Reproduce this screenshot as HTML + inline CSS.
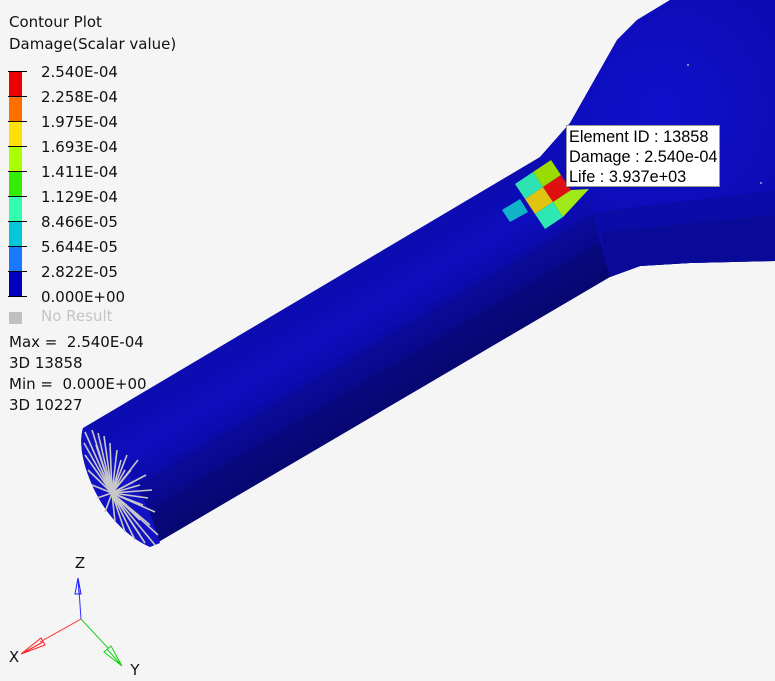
<!DOCTYPE html>
<html><head><meta charset="utf-8"><style>
html,body{margin:0;padding:0;background:#f5f5f5;}
body{width:775px;height:681px;position:relative;overflow:hidden;font-family:"DejaVu Sans",sans-serif;}
.t{position:absolute;font-size:15px;color:#111;white-space:nowrap;line-height:17px;}
.tip{position:absolute;left:566px;top:125px;width:154px;height:62px;background:#fff;border:1px solid #999;font-family:"Liberation Sans",Arial,sans-serif;font-size:16.3px;line-height:20px;color:#000;box-sizing:border-box;padding:1px 0 0 2px;}
</style></head><body>
<svg width="775" height="681" style="position:absolute;left:0;top:0">
<defs>
<linearGradient id="sh" gradientUnits="userSpaceOnUse" x1="300" y1="299" x2="370" y2="417">
<stop offset="0" stop-color="#0c0cb0"/><stop offset="0.35" stop-color="#0d0dbe"/>
<stop offset="0.55" stop-color="#0b0baa"/><stop offset="0.56" stop-color="#0a0a9c"/>
<stop offset="0.75" stop-color="#09098c"/><stop offset="0.76" stop-color="#080880"/>
<stop offset="1" stop-color="#070772"/></linearGradient>
<radialGradient id="fl" cx="660" cy="110" r="160" gradientUnits="userSpaceOnUse">
<stop offset="0" stop-color="#1010cc"/><stop offset="1" stop-color="#0b0bb2"/></radialGradient>
</defs>
<path d="M83,428 L540,157 L570,123 L617,40 L637,20 L670,0 L775,0 L775,261 L690,263 L640,266 L610,277 L150,547 C130,538 110,520 97,495 C84,470 78,445 83,428 Z" fill="url(#sh)"/>
<path d="M540,157 L570,123 L617,40 L637,20 L670,0 L775,0 L775,261 L690,263 L640,266 L610,277 L600,240 L590,200 Z" fill="url(#fl)"/>
<path d="M600,232 L775,215 L775,261 L690,263 L640,266 L610,277 Z" fill="#0a0a98"/>
<path d="M595,212 L775,190 L775,215 L600,232 Z" fill="#0b0ba8"/>
<path d="M83,428 C78,445 84,470 97,495 C110,520 130,538 150,547 L160,543 C150,510 135,470 90,430 Z" fill="#1212c4"/>
<g stroke="#c8c8c8" stroke-width="1.6">
<line x1="112" y1="493" x2="85" y2="432"/><line x1="112" y1="493" x2="92" y2="430"/>
<line x1="112" y1="493" x2="98" y2="433"/><line x1="112" y1="493" x2="104" y2="436"/>
<line x1="112" y1="493" x2="110" y2="443"/><line x1="112" y1="493" x2="117" y2="450"/>
<line x1="112" y1="493" x2="121" y2="460"/><line x1="112" y1="493" x2="127" y2="455"/>
<line x1="112" y1="493" x2="131" y2="470"/><line x1="112" y1="493" x2="133" y2="482"/>
<line x1="112" y1="493" x2="140" y2="485"/><line x1="112" y1="493" x2="148" y2="498"/>
<line x1="112" y1="493" x2="143" y2="505"/><line x1="112" y1="493" x2="155" y2="512"/>
<line x1="112" y1="493" x2="150" y2="525"/><line x1="112" y1="493" x2="158" y2="535"/>
<line x1="112" y1="493" x2="155" y2="545"/><line x1="112" y1="493" x2="145" y2="543"/>
<line x1="112" y1="493" x2="135" y2="540"/><line x1="112" y1="493" x2="125" y2="532"/>
<line x1="112" y1="493" x2="115" y2="522"/><line x1="112" y1="493" x2="105" y2="512"/>
<line x1="112" y1="493" x2="97" y2="498"/><line x1="112" y1="493" x2="92" y2="485"/>
<line x1="112" y1="493" x2="88" y2="470"/><line x1="112" y1="493" x2="85" y2="455"/>
<line x1="112" y1="493" x2="84" y2="443"/><line x1="112" y1="493" x2="96" y2="445"/>
<line x1="112" y1="493" x2="140" y2="520"/><line x1="112" y1="493" x2="125" y2="470"/>
<line x1="112" y1="493" x2="138" y2="460"/><line x1="112" y1="493" x2="146" y2="475"/>
<line x1="112" y1="493" x2="152" y2="490"/><line x1="112" y1="493" x2="140" y2="535"/>
</g>
<g>
<polygon points="515,184 533,172 543,187 525,199" fill="#2ee3b2"/>
<polygon points="533,172 551,160 561,175 543,187" fill="#98dc00"/>
<polygon points="525,199 543,187 553,202 535,214" fill="#e0c410"/>
<polygon points="543,187 561,175 571,190 553,202" fill="#e01010"/>
<polygon points="502,210 520,199 528,212 510,222" fill="#10b4c8"/>
<polygon points="535,214 553,202 563,217 545,229" fill="#2ee8b4"/>
<polygon points="553,202 571,190 589,189 563,217" fill="#a0e818"/>
</g>
<circle cx="688" cy="65" r="1" fill="#aab"/><circle cx="761" cy="183" r="1" fill="#aab"/>
<g fill="none" stroke-width="1">
<line x1="81" y1="619" x2="79" y2="590" stroke="#3030ff"/>
<path d="M78,578 L75,594 L81,594 Z M78,578 L79,594" stroke="#2020ff"/>
<line x1="81" y1="619" x2="40" y2="642" stroke="#ff3030"/>
<path d="M21,654 L41,638 L45,645 Z M21,654 L43,642" stroke="#ff2020"/>
<line x1="81" y1="619" x2="108" y2="648" stroke="#20d020"/>
<path d="M122,666 L104,652 L111,646 Z M122,666 L107,649" stroke="#10d010"/>
</g>
<text x="80" y="568" font-family="DejaVu Sans" font-size="15" text-anchor="middle" fill="#111">Z</text>
<text x="14" y="662" font-family="DejaVu Sans" font-size="15" text-anchor="middle" fill="#111">X</text>
<text x="135" y="675" font-family="DejaVu Sans" font-size="15" text-anchor="middle" fill="#111">Y</text>
<g>
<rect x="9" y="71" width="13" height="25" fill="#ee0000"/>
<rect x="9" y="96" width="13" height="25" fill="#ff6e00"/>
<rect x="9" y="121" width="13" height="25" fill="#ffe000"/>
<rect x="9" y="146" width="13" height="25" fill="#aaff00"/>
<rect x="9" y="171" width="13" height="25" fill="#33ee00"/>
<rect x="9" y="196" width="13" height="25" fill="#30ffb0"/>
<rect x="9" y="221" width="13" height="25" fill="#00c8d8"/>
<rect x="9" y="246" width="13" height="25" fill="#1a7aff"/>
<rect x="9" y="271" width="13" height="25" fill="#0000c0"/>
<rect x="9" y="312" width="13" height="12" fill="#c0c0c0"/>
</g>
<g stroke="#000" stroke-width="1">
<line x1="8" y1="71.5" x2="27" y2="71.5"/><line x1="8" y1="96.5" x2="27" y2="96.5"/>
<line x1="8" y1="121.5" x2="27" y2="121.5"/><line x1="8" y1="146.5" x2="27" y2="146.5"/>
<line x1="8" y1="171.5" x2="27" y2="171.5"/><line x1="8" y1="196.5" x2="27" y2="196.5"/>
<line x1="8" y1="221.5" x2="27" y2="221.5"/><line x1="8" y1="246.5" x2="27" y2="246.5"/>
<line x1="8" y1="271.5" x2="27" y2="271.5"/><line x1="8" y1="296.5" x2="27" y2="296.5"/>
</g>
</svg>
<div class="t" style="left:9px;top:14px">Contour Plot</div>
<div class="t" style="left:9px;top:36px">Damage(Scalar value)</div>
<div class="t" style="left:41px;top:64px">2.540E-04</div>
<div class="t" style="left:41px;top:89px">2.258E-04</div>
<div class="t" style="left:41px;top:114px">1.975E-04</div>
<div class="t" style="left:41px;top:139px">1.693E-04</div>
<div class="t" style="left:41px;top:164px">1.411E-04</div>
<div class="t" style="left:41px;top:189px">1.129E-04</div>
<div class="t" style="left:41px;top:214px">8.466E-05</div>
<div class="t" style="left:41px;top:239px">5.644E-05</div>
<div class="t" style="left:41px;top:264px">2.822E-05</div>
<div class="t" style="left:41px;top:289px">0.000E+00</div>
<div class="t" style="left:41px;top:308px;color:#c4c4c4">No Result</div>
<div class="t" style="left:9px;top:334px">Max =&nbsp; 2.540E-04</div>
<div class="t" style="left:9px;top:355px">3D 13858</div>
<div class="t" style="left:9px;top:376px">Min =&nbsp; 0.000E+00</div>
<div class="t" style="left:9px;top:397px">3D 10227</div>
<div class="tip">Element ID : 13858<br>Damage : 2.540e-04<br>Life : 3.937e+03</div>
</body></html>
